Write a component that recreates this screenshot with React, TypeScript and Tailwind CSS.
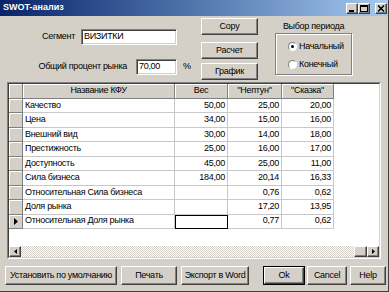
import React from 'react';

const raised =
  'bg-[#d4d0c8] border border-t-white border-l-white border-r-[#404040] border-b-[#404040] shadow-[inset_-1px_-1px_0_#808080]';
const sunken =
  'bg-white border border-t-[#808080] border-l-[#808080] border-r-white border-b-white shadow-[inset_1px_1px_0_#404040,inset_-1px_-1px_0_#d4d0c8]';

const rows: [string, string, string, string][] = [
  ['Качество', '50,00', '25,00', '20,00'],
  ['Цена', '34,00', '15,00', '16,00'],
  ['Внешний вид', '30,00', '14,00', '18,00'],
  ['Престижность', '25,00', '16,00', '17,00'],
  ['Доступность', '45,00', '25,00', '11,00'],
  ['Сила бизнеса', '184,00', '20,14', '16,33'],
  ['Относительная Сила бизнеса', '', '0,76', '0,62'],
  ['Доля рынка', '', '17,20', '13,95'],
  ['Относительная Доля рынка', '', '0,77', '0,62'],
];

function Btn({ label, className = '' }: { label: string; className?: string }) {
  return (
    <div className={`${raised} flex items-center justify-center text-black ${className}`}>
      {label}
    </div>
  );
}

function Radio({ label, checked }: { label: string; checked?: boolean }) {
  return (
    <div className="flex items-center h-[11px]">
      <span className="w-[9px] h-[9px] rounded-full bg-white border border-t-[#808080] border-l-[#808080] border-r-white border-b-white flex items-center justify-center">
        {checked && <span className="w-[3px] h-[3px] rounded-full bg-black" />}
      </span>
      <span className="ml-[2px]">{label}</span>
    </div>
  );
}

function TitleButton({ kind }: { kind: 'min' | 'max' | 'close' }) {
  return (
    <div className={`${raised} w-[12px] h-[11px] flex items-center justify-center`}>
      <svg width="8" height="7" viewBox="0 0 8 7">
        {kind === 'min' && <rect x="1" y="5" width="5" height="2" fill="#000" />}
        {kind === 'max' && (
          <g fill="none" stroke="#000">
            <rect x="0.5" y="0.5" width="7" height="6" />
            <line x1="0" y1="1.5" x2="8" y2="1.5" />
          </g>
        )}
        {kind === 'close' && (
          <g stroke="#000" strokeWidth="1.5">
            <line x1="1" y1="0.5" x2="7" y2="6.5" />
            <line x1="7" y1="0.5" x2="1" y2="6.5" />
          </g>
        )}
      </svg>
    </div>
  );
}

export default function App() {
  return (
    <div className="w-[389px] h-[292px] bg-[#d4d0c8] flex flex-col overflow-hidden font-['Liberation_Sans',Arial,sans-serif] text-[9px] tracking-[-0.3px] text-black border-r border-b border-r-[#404040] border-b-[#404040]">
      {/* Заголовок окна */}
      <div className="h-[16px] shrink-0 flex items-center bg-gradient-to-r from-[#0a246a] to-[#a6caf0] pl-[3px] pr-[1px]">
        <span className="text-white font-bold tracking-normal">SWOT-анализ</span>
        <div className="ml-auto flex items-center">
          <TitleButton kind="min" />
          <TitleButton kind="max" />
          <div className="w-[5px]" />
          <TitleButton kind="close" />
        </div>
      </div>

      {/* Верхняя часть формы */}
      <div className="h-[66px] shrink-0 flex">
        <div className="w-[195px] pt-[13px]">
          <div className="flex items-center h-[16px]">
            <span className="w-[75px] text-right">Сегмент</span>
            <div className={`${sunken} ml-[6px] w-[96px] h-[16px] flex items-center pl-[2px]`}>ВИЗИТКИ</div>
          </div>
          <div className="flex items-center h-[16px] mt-[14px]">
            <span className="w-[127px] text-right">Общий процент рынка</span>
            <div className={`${sunken} ml-[9px] w-[41px] h-[16px] flex items-center pl-[2px]`}>70,00</div>
            <span className="ml-[6px]">%</span>
          </div>
        </div>

        <div className="ml-[6px] w-[57px] pt-[2px] flex flex-col">
          <Btn label="Copy" className="h-[17px]" />
          <Btn label="Расчет" className="h-[17px] mt-[7px]" />
          <Btn label="График" className="h-[17px] mt-[4px]" />
        </div>

        <div className="ml-[17px] w-[77px] pt-[4px] flex flex-col">
          <div className="h-[13px] flex items-center justify-center">Выбор периода</div>
          <div className="mt-[0px] h-[42px] border border-[#808080] shadow-[inset_1px_1px_0_#fff,1px_1px_0_#fff] flex flex-col pl-[12px] pt-[7px] gap-[7px]">
            <Radio label="Начальный" checked />
            <Radio label="Конечный" />
          </div>
        </div>
      </div>

      {/* Таблица */}
      <div className="mx-[7px] h-[177px] shrink-0 border border-t-[#808080] border-l-[#808080] border-r-white border-b-white">
        <div className="h-full flex flex-col bg-white border border-t-[#404040] border-l-[#404040] border-r-[#d4d0c8] border-b-[#d4d0c8]">
          <div className="h-[15px] flex shrink-0">
            <div className="w-[14px] bg-[#d4d0c8] border-r border-b border-[#808080] shadow-[inset_1px_1px_0_#fff]" />
            {['Название КФУ', 'Вес', '"Нептун"', '"Сказка"'].map((h, i) => (
              <div
                key={h}
                className={`${['w-[152px]', 'w-[53px]', 'w-[54px]', 'w-[52px]'][i]} bg-[#d4d0c8] border-r border-b border-[#808080] shadow-[inset_1px_1px_0_#fff] flex items-center justify-center`}
              >
                {h}
              </div>
            ))}
          </div>
          {rows.map((r, ri) => (
            <div key={r[0]} className="h-[14.44px] flex shrink-0">
              <div className="w-[14px] bg-[#d4d0c8] border-r border-b border-[#808080] shadow-[inset_1px_1px_0_#fff] flex items-center justify-center">
                {ri === rows.length - 1 && (
                  <svg width="4" height="7" viewBox="0 0 4 7">
                    <path d="M0 0 L4 3.5 L0 7 Z" fill="#000" />
                  </svg>
                )}
              </div>
              <div className="w-[152px] border-r border-b border-[#c8c8c8] flex items-center pl-[2px] whitespace-nowrap">
                {r[0]}
              </div>
              <div
                className={`w-[53px] flex items-center justify-end pr-[2px] ${
                  ri === rows.length - 1 ? 'border border-black' : 'border-r border-b border-[#c8c8c8]'
                }`}
              >
                {r[1]}
              </div>
              <div className="w-[54px] border-r border-b border-[#c8c8c8] flex items-center justify-end pr-[2px]">
                {r[2]}
              </div>
              <div className="w-[52px] border-r border-b border-[#c8c8c8] flex items-center justify-end pr-[2px]">
                {r[3]}
              </div>
            </div>
          ))}
          <div className="flex-1" />
          {/* Горизонтальная прокрутка */}
          <div className="h-[11px] shrink-0 flex">
            <div className={`${raised} w-[12px] flex items-center justify-center`}>
              <svg width="3" height="5" viewBox="0 0 3 5">
                <path d="M3 0 L0 2.5 L3 5 Z" fill="#000" />
              </svg>
            </div>
            <div className="flex-1 bg-[repeating-conic-gradient(#d4d0c8_0_25%,#ffffff_0_50%)] bg-[length:2px_2px]" />
            <div className={`${raised} w-[13px]`} />
            <div className={`${raised} w-[12px] flex items-center justify-center`}>
              <svg width="3" height="5" viewBox="0 0 3 5">
                <path d="M0 0 L3 2.5 L0 5 Z" fill="#000" />
              </svg>
            </div>
          </div>
        </div>
      </div>

      {/* Кнопки внизу */}
      <div className="flex pt-[7px] pl-[5px]">
        <Btn label="Установить по умолчанию" className="w-[112px] h-[19px]" />
        <Btn label="Печать" className="w-[56px] h-[19px] ml-[4px]" />
        <Btn label="Экспорт в Word" className="w-[68px] h-[19px] ml-[4px]" />
        <div className="ml-[14px] w-[42px] h-[19px] border border-black">
          <Btn label="Ok" className="w-full h-full" />
        </div>
        <Btn label="Cancel" className="w-[40px] h-[19px] ml-[2px]" />
        <Btn label="Help" className="w-[36px] h-[19px] ml-[3px]" />
      </div>
    </div>
  );
}
